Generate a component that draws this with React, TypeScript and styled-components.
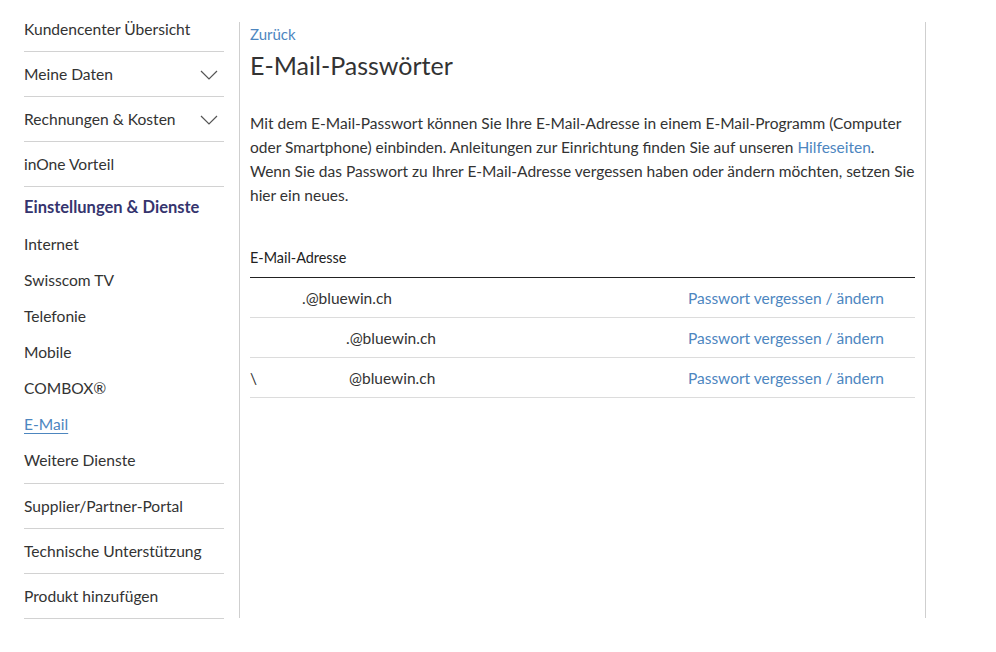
import * as React from 'react'
import styled, { createGlobalStyle } from 'styled-components'

const GlobalStyle = createGlobalStyle`
  body {
    margin: 0;
    background: #fff;
    font-family: Lato, "Liberation Sans", sans-serif;
    color: #333;
  }
`

const topItems = [
  { label: 'Kundencenter Übersicht' },
  { label: 'Meine Daten', expandable: true },
  { label: 'Rechnungen & Kosten', expandable: true },
  { label: 'inOne Vorteil' },
]

const subItems = ['Internet', 'Swisscom TV', 'Telefonie', 'Mobile', 'COMBOX®', 'E-Mail', 'Weitere Dienste']

const bottomItems = ['Supplier/Partner-Portal', 'Technische Unterstützung', 'Produkt hinzufügen']

const addresses = [
  { lead: '', mask: 52, rest: '.@bluewin.ch' },
  { lead: '', mask: 96, rest: '.@bluewin.ch' },
  { lead: '\\', mask: 92, rest: '@bluewin.ch' },
]

const Chevron = () => (
  <svg width="18" height="10" viewBox="0 0 18 10" fill="none">
    <polyline points="1,1 9,9 17,1" stroke="#555" strokeWidth="1.2" />
  </svg>
)

const App: React.FC = () => {
  return (
    <Page>
      <GlobalStyle />
      <Sidebar>
        {topItems.map((item) => (
          <NavRow key={item.label}>
            <span>{item.label}</span>
            {item.expandable && <Chevron />}
          </NavRow>
        ))}
        <NavSection>
          <SectionTitle>Einstellungen &amp; Dienste</SectionTitle>
          {subItems.map((label) => (
            <SubItem key={label} active={label === 'E-Mail'}>
              {label}
            </SubItem>
          ))}
        </NavSection>
        {bottomItems.map((label) => (
          <NavRow key={label}>
            <span>{label}</span>
          </NavRow>
        ))}
      </Sidebar>

      <Main>
        <BackLink>Zurück</BackLink>
        <Title>E-Mail-Passwörter</Title>
        <Intro>
          Mit dem E-Mail-Passwort können Sie Ihre E-Mail-Adresse in einem E-Mail-Programm (Computer
          <br />
          oder Smartphone) einbinden. Anleitungen zur Einrichtung finden Sie auf unseren{' '}
          <InlineLink>Hilfeseiten</InlineLink>.
          <br />
          Wenn Sie das Passwort zu Ihrer E-Mail-Adresse vergessen haben oder ändern möchten, setzen Sie
          <br />
          hier ein neues.
        </Intro>

        <Table>
          <HeadRow>E-Mail-Adresse</HeadRow>
          {addresses.map((a, i) => (
            <Row key={i}>
              <Address>
                {a.lead}
                <Mask style={{ width: a.mask }} />
                {a.rest}
              </Address>
              <RowLink>Passwort vergessen / ändern</RowLink>
            </Row>
          ))}
        </Table>
      </Main>
    </Page>
  )
}

const Page = styled.div`
  display: flex;
  align-items: flex-start;
  width: 996px;
  height: 652px;
`

const Sidebar = styled.nav`
  width: 200px;
  margin: 7px 15px 0 24px;
  display: flex;
  flex-direction: column;
  font-size: 15.6px;
`

const NavRow = styled.div`
  height: 44px;
  display: flex;
  align-items: center;
  justify-content: space-between;
  padding-right: 6px;
  border-bottom: 1px solid #d2d2d2;
  color: #333;

  svg {
    margin-top: 1px;
  }
`

const NavSection = styled.div`
  display: flex;
  flex-direction: column;
  padding-bottom: 5px;
  border-bottom: 1px solid #d2d2d2;
`

const SectionTitle = styled.div`
  height: 39px;
  display: flex;
  align-items: center;
  font-size: 16.5px;
  font-weight: 700;
  color: #35346e;
`

const SubItem = styled.div<{ active?: boolean }>`
  height: 36px;
  display: flex;
  align-items: center;
  color: ${(p) => (p.active ? '#4d86bf' : '#333')};
  text-decoration: ${(p) => (p.active ? 'underline' : 'none')};
  text-underline-offset: 3px;
`

const Main = styled.main`
  width: 665px;
  height: 594px;
  margin-top: 22px;
  padding: 2px 10px 0;
  border-left: 1px solid #cfcfcf;
  border-right: 1px solid #cfcfcf;
`

const BackLink = styled.div`
  font-size: 15px;
  line-height: 20px;
  color: #4d86bf;
`

const Title = styled.h1`
  margin: 4px 0 0;
  font-size: 25px;
  line-height: 34px;
  font-weight: 400;
  color: #333;
`

const Intro = styled.p`
  margin: 29px 0 0;
  font-size: 15.5px;
  line-height: 24px;
  white-space: nowrap;
  color: #333;
`

const InlineLink = styled.span`
  color: #4d86bf;
`

const Table = styled.div`
  margin-top: 30px;
  display: flex;
  flex-direction: column;
`

const HeadRow = styled.div`
  height: 40px;
  display: flex;
  align-items: center;
  border-bottom: 1px solid #222;
  font-size: 14.4px;
  color: #222;
`

const Row = styled.div`
  height: 39px;
  display: flex;
  align-items: center;
  justify-content: space-between;
  padding-right: 31px;
  border-bottom: 1px solid #dcdcdc;
  font-size: 15.5px;
`

const Address = styled.span`
  display: flex;
  align-items: center;
  color: #333;
`

const Mask = styled.span`
  display: inline-block;
  height: 1px;
`

const RowLink = styled.span`
  color: #4d86bf;
`

export default App
